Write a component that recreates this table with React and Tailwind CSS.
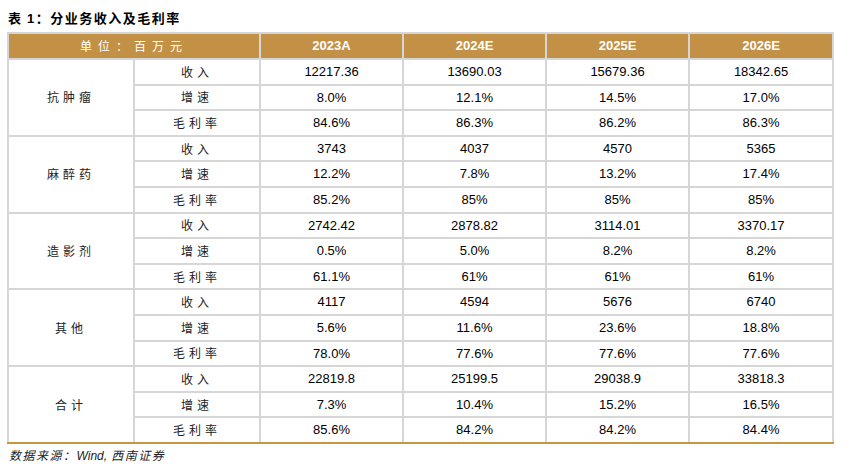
import React from 'react';

const years = ['2023A', '2024E', '2025E', '2026E'];

const groups = [
  {
    name: '抗肿瘤',
    rows: [
      ['收入', '12217.36', '13690.03', '15679.36', '18342.65'],
      ['增速', '8.0%', '12.1%', '14.5%', '17.0%'],
      ['毛利率', '84.6%', '86.3%', '86.2%', '86.3%'],
    ],
  },
  {
    name: '麻醉药',
    rows: [
      ['收入', '3743', '4037', '4570', '5365'],
      ['增速', '12.2%', '7.8%', '13.2%', '17.4%'],
      ['毛利率', '85.2%', '85%', '85%', '85%'],
    ],
  },
  {
    name: '造影剂',
    rows: [
      ['收入', '2742.42', '2878.82', '3114.01', '3370.17'],
      ['增速', '0.5%', '5.0%', '8.2%', '8.2%'],
      ['毛利率', '61.1%', '61%', '61%', '61%'],
    ],
  },
  {
    name: '其他',
    rows: [
      ['收入', '4117', '4594', '5676', '6740'],
      ['增速', '5.6%', '11.6%', '23.6%', '18.8%'],
      ['毛利率', '78.0%', '77.6%', '77.6%', '77.6%'],
    ],
  },
  {
    name: '合计',
    rows: [
      ['收入', '22819.8', '25199.5', '29038.9', '33818.3'],
      ['增速', '7.3%', '10.4%', '15.2%', '16.5%'],
      ['毛利率', '85.6%', '84.2%', '84.2%', '84.4%'],
    ],
  },
];

const cjk = "font-['Noto_Sans_CJK_SC',sans-serif]";
const num = "font-['Liberation_Sans',Arial,sans-serif]";

export default function App() {
  return (
    <div className="w-[853px] h-[464px] bg-white relative overflow-hidden">
      {/* Title */}
      <div className={`absolute left-[8px] top-[8px] text-[13px] leading-[20px] font-bold tracking-[1.5px] text-black ${cjk}`}>
        表 <span className={num}>1</span>：分业务收入及毛利率
      </div>

      <table className="absolute left-[7px] top-[32px] w-[825px] border-collapse table-fixed">
        <colgroup>
          <col className="w-[126px]" />
          <col className="w-[126px]" />
          <col className="w-[143px]" />
          <col className="w-[143px]" />
          <col className="w-[143px]" />
          <col className="w-[144px]" />
        </colgroup>
        <thead>
          <tr className="h-[26px] bg-[#c39145]">
            <th
              colSpan={2}
              className={`border-2 border-[#d6d6d6] text-white text-[12px] font-normal tracking-[6px] text-center ${cjk}`}
            >
              单位：百万元
            </th>
            {years.map((y) => (
              <th
                key={y}
                className={`border-2 border-[#d6d6d6] text-white text-[13px] font-bold text-center ${num}`}
              >
                {y}
              </th>
            ))}
          </tr>
        </thead>
        <tbody>
          {groups.map((g, gi) =>
            g.rows.map((r, ri) => {
              const last = gi === groups.length - 1 && ri === 2;
              return (
                <tr key={g.name + ri} className="h-[25.6px]">
                  {ri === 0 && (
                    <td
                      rowSpan={3}
                      className={`border-2 border-[#d6d6d6] text-center text-[12px] tracking-[4px] text-[#222] ${cjk} ${gi === groups.length - 1 ? '!border-b-[#c8963e]' : ''}`}
                    >
                      {g.name}
                    </td>
                  )}
                  <td
                    className={`border-2 border-[#d6d6d6] text-center text-[12px] tracking-[4px] text-[#222] ${cjk} ${last ? '!border-b-[#c8963e]' : ''}`}
                  >
                    {r[0]}
                  </td>
                  {r.slice(1).map((v, vi) => (
                    <td
                      key={vi}
                      className={`border-2 border-[#d6d6d6] text-center text-[13px] text-black ${num} ${last ? '!border-b-[#c8963e]' : ''}`}
                    >
                      {v}
                    </td>
                  ))}
                </tr>
              );
            })
          )}
        </tbody>
      </table>

      {/* Source */}
      <div className={`absolute left-[9px] top-[446px] text-[12px] leading-[18px] italic tracking-[1.5px] text-[#222] ${cjk}`}>
        数据来源：<span className={`${num} tracking-normal`}>Wind,</span> 西南证券
      </div>
    </div>
  );
}
